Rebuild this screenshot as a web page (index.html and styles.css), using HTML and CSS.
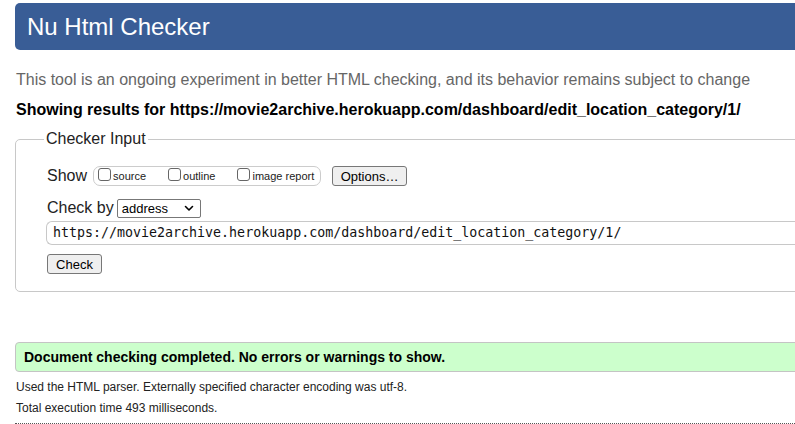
FILE: index.html
```html
<!DOCTYPE html>
<html>
<head>
<meta charset="utf-8">
<title>Nu Html Checker</title>
<link rel="stylesheet" href="styles.css">
</head>
<body>
<div class="page">
  <h1 class="title">Nu Html Checker</h1>
  <p class="intro">This tool is an ongoing experiment in better HTML checking, and its behavior remains subject to change</p>
  <p class="showing">Showing results for https://movie2archive.herokuapp.com/dashboard/edit_location_category/1/</p>
  <fieldset class="input">
    <legend class="legend">Checker Input</legend>
    <div class="row show-row">
      <span class="label">Show</span>
      <span class="group">
        <span class="opt"><span class="box"></span>source</span>
        <span class="opt"><span class="box"></span>outline</span>
        <span class="opt"><span class="box"></span>image report</span>
      </span>
      <span class="btn">Options…</span>
    </div>
    <div class="row by-row">
      <span class="label">Check by</span>
      <span class="select">address<svg class="chev" width="10" height="7" viewBox="0 0 10 7"><path d="M1.5 1.5 L5 5 L8.5 1.5" fill="none" stroke="#000" stroke-width="1.6" stroke-linecap="round" stroke-linejoin="round"/></svg></span>
    </div>
    <div class="url">https://movie2archive.herokuapp.com/dashboard/edit_location_category/1/</div>
    <div class="row check-row"><span class="btn check">Check</span></div>
  </fieldset>
  <div class="success">Document checking completed. No errors or warnings to show.</div>
  <p class="meta first">Used the HTML parser. Externally specified character encoding was utf-8.</p>
  <p class="meta">Total execution time 493 milliseconds.</p>
  <div class="rule"></div>
</div>
</body>
</html>
```

FILE: styles.css
```css
html, body {
  margin: 0;
  padding: 0;
  background: #fff;
  overflow: hidden;
}
body {
  font-family: "Liberation Sans", Arial, sans-serif;
  color: #000;
}
.page {
  width: 820px;
  padding: 3px 0 0 15px;
}
.title {
  margin: 0;
  height: 47px;
  box-sizing: border-box;
  background: #395d96;
  color: #fff;
  border-radius: 5px;
  font-weight: normal;
  font-size: 24px;
  line-height: 47px;
  padding-left: 12px;
}
.intro {
  margin: 20px 0 0 1px;
  font-size: 16px;
  line-height: 20px;
  color: #666;
}
.showing {
  margin: 10px 0 0 1px;
  font-size: 16px;
  line-height: 20px;
  font-weight: bold;
  color: #000;
}
.input {
  margin: 10px 0 0 0;
  border: 1px solid #c8c8c8;
  border-radius: 5px;
  padding: 17px 0 17px 31px;
  min-inline-size: 0;
}
.legend {
  margin-left: -3px;
  padding: 0 2px;
  font-size: 16px;
  line-height: 18px;
  color: #222;
}
.row {
  display: flex;
  align-items: center;
}
.label {
  font-size: 16px;
  color: #222;
}
.show-row {
  height: 22px;
}
.group {
  display: flex;
  align-items: center;
  margin-left: 6px;
  height: 20px;
  box-sizing: border-box;
  width: 228px;
  border: 1px solid #ccc;
  border-radius: 7px;
  padding-left: 4px;
  font-size: 11px;
  color: #222;
}
.opt {
  display: flex;
  align-items: center;
  margin-right: 22px;
}
.opt:last-child {
  margin-right: 0;
}
.box {
  width: 11px;
  height: 11px;
  border: 1px solid #666;
  border-radius: 3px;
  margin-right: 2px;
  margin-top: -3px;
}
.btn {
  display: inline-flex;
  align-items: center;
  justify-content: center;
  height: 20px;
  box-sizing: border-box;
  border: 1px solid #777;
  border-radius: 3px;
  background: #efefef;
  font-size: 13px;
  color: #000;
}
.show-row .btn {
  margin-left: 11px;
  width: 75px;
}
.by-row {
  margin-top: 11px;
  height: 20px;
}
.select {
  display: inline-flex;
  align-items: center;
  justify-content: space-between;
  margin-left: 3px;
  width: 84px;
  height: 19px;
  box-sizing: border-box;
  border: 1px solid #777;
  border-radius: 2px;
  padding: 0 6px 0 4px;
  font-size: 13px;
  color: #000;
}
.url {
  margin: 3px 0 0 -1px;
  height: 24px;
  box-sizing: border-box;
  border: 1px solid #c8c8c8;
  border-right: none;
  border-radius: 6px 0 0 6px;
  padding-left: 6px;
  font-family: "DejaVu Sans Mono", "Liberation Mono", monospace;
  font-size: 13.3px;
  line-height: 22px;
  color: #111;
}
.check-row {
  margin-top: 9px;
}
.btn.check {
  width: 55px;
  font-size: 13px;
}
.success {
  margin-top: 50px;
  height: 30px;
  box-sizing: border-box;
  background: #ccffcc;
  border: 1px solid #c4c4c4;
  border-radius: 4px 0 0 4px;
  padding-left: 8px;
  font-size: 14px;
  font-weight: bold;
  line-height: 28px;
  color: #000;
}
.meta {
  margin: 0 0 0 1px;
  font-size: 12px;
  line-height: 21px;
  color: #222;
}
.meta.first {
  margin-top: 5px;
}
.rule {
  margin-top: 4px;
  border-top: 1px dotted #555;
}
```
